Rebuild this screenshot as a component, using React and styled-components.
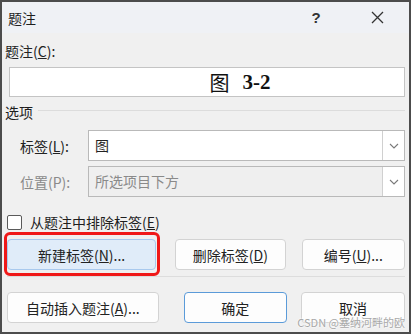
import React from "react";
import styled, { createGlobalStyle } from "styled-components";

const Global = createGlobalStyle`
  html, body { margin: 0; padding: 0; background: #ffffff; }
  body { font-family: "Noto Sans CJK SC", "Noto Sans", sans-serif; }
`;

const Window = styled.div`
  position: relative;
  width: 407px;
  height: 330px;
  border: 2px solid #4c4c4c;
  background: #f0f0f0;
  overflow: hidden;
  color: #1e1e1e;
  font-size: 14px;
`;

const TitleBar = styled.div`
  height: 31px;
  background: #eff1f5;
  display: flex;
  align-items: center;
  padding: 0 0 0 6px;
`;

const Title = styled.div`
  flex: 1;
  font-size: 14px;
  line-height: 20px;
`;

const Help = styled.div`
  width: 60px;
  text-align: center;
  font-family: "Liberation Sans", sans-serif;
  font-weight: 700;
  font-size: 15px;
  color: #333;
`;

const Close = styled.div`
  width: 63px;
  display: flex;
  justify-content: center;
`;

const Body = styled.div`
  padding: 8px 4px 0 3px;
  display: flex;
  flex-direction: column;
`;

const Label = styled.div`
  line-height: 20px;
  color: ${(p) => (p.$disabled ? "#8a8a8a" : "#222")};
`;

const Preview = styled.div`
  margin: 6px 0 0 4px;
  height: 28px;
  background: #fff;
  border: 1px solid #c4c4c4;
  display: flex;
  align-items: center;
  justify-content: center;
  padding-left: 66px;
  font-family: "Liberation Serif", "Noto Serif CJK SC", serif;
  font-weight: 700;
  font-size: 21px;
  color: #111;
  gap: 13px;
`;

const PreviewChar = styled.span`
  font-family: "Noto Sans CJK SC", sans-serif;
  font-weight: 400;
  font-size: 20px;
`;

const GroupHead = styled.div`
  margin-top: 5px;
  display: flex;
  align-items: center;
  gap: 5px;
  line-height: 20px;
  &::after {
    content: "";
    flex: 1;
    height: 1px;
    background: #dcdcdc;
    margin-top: -3px;
  }
`;

const FieldRow = styled.div`
  display: flex;
  align-items: center;
  margin-top: ${(p) => p.$top}px;
  padding-left: 15px;
`;

const FieldLabel = styled(Label)`
  width: 68px;
`;

const Combo = styled.div`
  flex: 1;
  height: 29px;
  display: flex;
  border: 1px solid #b9b9b9;
  background: ${(p) => (p.$disabled ? "#efefef" : "#fff")};
`;

const ComboText = styled.div`
  flex: 1;
  padding-left: 6px;
  line-height: 29px;
  color: ${(p) => (p.$disabled ? "#8a8a8a" : "#222")};
`;

const ComboButton = styled.div`
  width: 21px;
  border-left: 1px solid #d0d0d0;
  background: #fff;
  display: flex;
  align-items: center;
  justify-content: center;
`;

const CheckRow = styled.label`
  margin-top: 15px;
  display: flex;
  align-items: center;
  gap: 8px;
  line-height: 20px;
  padding-left: 2px;
`;

const CheckBox = styled.span`
  width: 13px;
  height: 13px;
  border: 1px solid #5a5a5a;
  border-radius: 2px;
  background: #fff;
`;

const ButtonRow = styled.div`
  display: flex;
  align-items: center;
  margin-top: ${(p) => p.$top}px;
  padding-left: 2px;
`;

const Button = styled.div`
  position: relative;
  box-sizing: border-box;
  width: ${(p) => p.$w}px;
  height: 31px;
  margin-left: ${(p) => p.$gap || 0}px;
  border-radius: 4px;
  border: 1px solid ${(p) => (p.$primary ? "#5b9bd9" : p.$active ? "#a8c9ee" : "#d3d3d3")};
  background: ${(p) => (p.$active ? "#e0ecf9" : "#fdfdfd")};
  display: flex;
  align-items: center;
  justify-content: center;
  color: #222;
  &::before {
    content: "";
    display: ${(p) => (p.$marked ? "block" : "none")};
    position: absolute;
    top: -8px;
    bottom: -7px;
    left: -4px;
    right: -5px;
    border: 3px solid #f01818;
    border-radius: 6px;
  }
`;

const Separator = styled.div`
  height: 1px;
  background: #dddddd;
  margin: 6px 0 0 2px;
`;

const Watermark = styled.div`
  position: absolute;
  right: 4px;
  bottom: 2px;
  font-size: 11px;
  color: #a8a8a8;
  text-shadow: 0 0 2px #fff, 0 0 2px #fff;
  font-family: "Noto Sans CJK SC", sans-serif;
`;

const Chevron = () => (
  <svg width="10" height="6" viewBox="0 0 10 6">
    <path d="M1 1l4 4 4-4" fill="none" stroke="#7a7a7a" strokeWidth="1.1" />
  </svg>
);

export default function App() {
  return (
    <>
      <Global />
      <Window>
        <TitleBar>
          <Title>题注</Title>
          <Help>?</Help>
          <Close>
            <svg width="13" height="13" viewBox="0 0 13 13">
              <path d="M1 1l11 11M12 1L1 12" stroke="#333" strokeWidth="1.3" />
            </svg>
          </Close>
        </TitleBar>
        <Body>
          <Label>题注(<u>C</u>):</Label>
          <Preview>
            <PreviewChar>图</PreviewChar>
            <span>3-2</span>
          </Preview>
          <GroupHead>选项</GroupHead>
          <FieldRow $top={8}>
            <FieldLabel>标签(<u>L</u>):</FieldLabel>
            <Combo>
              <ComboText>图</ComboText>
              <ComboButton><Chevron /></ComboButton>
            </Combo>
          </FieldRow>
          <FieldRow $top={5}>
            <FieldLabel $disabled>位置(P):</FieldLabel>
            <Combo $disabled>
              <ComboText $disabled>所选项目下方</ComboText>
              <ComboButton><Chevron /></ComboButton>
            </Combo>
          </FieldRow>
          <CheckRow>
            <CheckBox />
            <span>从题注中排除标签(<u>E</u>)</span>
          </CheckRow>
          <ButtonRow $top={7}>
            <Button $w={150} $active $marked>新建标签(<u>N</u>)...</Button>
            <Button $w={111} $gap={19}>删除标签(<u>D</u>)</Button>
            <Button $w={104} $gap={16}>编号(<u>U</u>)...</Button>
          </ButtonRow>
          <Separator />
          <ButtonRow $top={15}>
            <Button $w={153}>自动插入题注(<u>A</u>)...</Button>
            <Button $w={104} $primary $gap={25}>确定</Button>
            <Button $w={105} $gap={14}>取消</Button>
          </ButtonRow>
        </Body>
        <Watermark>CSDN @塞纳河畔的欧</Watermark>
      </Window>
    </>
  );
}
